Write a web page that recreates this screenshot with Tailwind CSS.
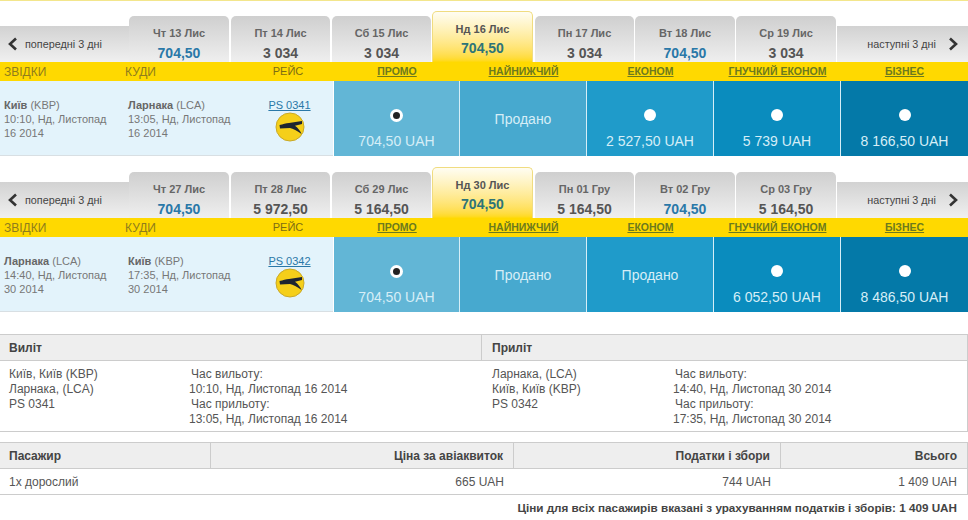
<!DOCTYPE html>
<html lang="en">
<head>
    <meta charset="UTF-8">
    <title>Вибір рейсу</title>
    <script src="https://cdn.jsdelivr.net/npm/@tailwindcss/browser@4"></script>
</head>
<body class="bg-white font-['Liberation_Sans',Arial,sans-serif] w-[968px] h-[520px] overflow-hidden text-[#555]">

<div class="h-px bg-[#f3e68c]"></div>

<!-- Outbound flight -->
<section class="mt-[10px]">
    <div class="flex items-end h-[51px]">
        <div class="w-[129px] h-[36px] flex items-center pl-[7px] gap-[7px] bg-gradient-to-b from-[#d2d2d2] to-[#f0f0f0] text-[10.8px] text-[#444]">
            <svg width="11" height="14" viewBox="0 0 11 14"><path d="M9 1.5 3 7l6 5.5" fill="none" stroke="#333" stroke-width="2.6"/></svg>
            <span>попередні 3 дні</span>
        </div>
        <div class="w-[100px] h-[46px] mr-[2px] rounded-t-[5px] bg-gradient-to-b from-[#cfcfcf] to-[#efefef] text-center font-bold"><div class="text-[11px] mt-[9px] text-[#666]">Чт 13 Лис</div><div class="text-[14px] mt-[1px] text-[#2a78a8]">704,50</div></div>
        <div class="w-[99px] h-[46px] mr-[2px] rounded-t-[5px] bg-gradient-to-b from-[#cfcfcf] to-[#efefef] text-center font-bold"><div class="text-[11px] mt-[9px] text-[#666]">Пт 14 Лис</div><div class="text-[14px] mt-[1px] text-[#555]">3 034</div></div>
        <div class="w-[99px] h-[46px] mr-px rounded-t-[5px] bg-gradient-to-b from-[#cfcfcf] to-[#efefef] text-center font-bold"><div class="text-[11px] mt-[9px] text-[#666]">Сб 15 Лис</div><div class="text-[14px] mt-[1px] text-[#555]">3 034</div></div>
        <div class="w-[101px] h-[51px] mr-[2px] rounded-t-[5px] border border-b-0 border-[#f0dc80] bg-gradient-to-b from-[#fffdf2] to-[#ffd900] text-center font-bold"><div class="text-[11px] mt-[9px] text-[#555]">Нд 16 Лис</div><div class="text-[14px] text-[#2d7478]">704,50</div></div>
        <div class="w-[99px] h-[46px] mr-px rounded-t-[5px] bg-gradient-to-b from-[#cfcfcf] to-[#efefef] text-center font-bold"><div class="text-[11px] mt-[9px] text-[#666]">Пн 17 Лис</div><div class="text-[14px] mt-[1px] text-[#555]">3 034</div></div>
        <div class="w-[100px] h-[46px] mr-px rounded-t-[5px] bg-gradient-to-b from-[#cfcfcf] to-[#efefef] text-center font-bold"><div class="text-[11px] mt-[9px] text-[#666]">Вт 18 Лис</div><div class="text-[14px] mt-[1px] text-[#2a78a8]">704,50</div></div>
        <div class="w-[100px] h-[46px] mr-px rounded-t-[5px] bg-gradient-to-b from-[#cfcfcf] to-[#efefef] text-center font-bold"><div class="text-[11px] mt-[9px] text-[#666]">Ср 19 Лис</div><div class="text-[14px] mt-[1px] text-[#555]">3 034</div></div>
        <div class="flex-1 h-[36px] flex items-center justify-end pr-[9px] gap-[12px] bg-gradient-to-b from-[#d2d2d2] to-[#f0f0f0] text-[10.8px] text-[#444]">
            <span>наступні 3 дні</span>
            <svg width="11" height="14" viewBox="0 0 11 14"><path d="M2 1.5 8 7l-6 5.5" fill="none" stroke="#333" stroke-width="2.6"/></svg>
        </div>
    </div>
    <div class="flex h-[19px] items-center bg-[#ffd900] text-[12px]">
        <span class="w-[125px] pl-[4px] text-[#8f7d1c]">ЗВІДКИ</span>
        <span class="w-[130px] text-[#8f7d1c]">КУДИ</span>
        <span class="w-[66px] mr-[13px] text-center text-[11px] text-[#7d6c14]">РЕЙС</span>
        <a class="w-[126px] text-center font-bold underline text-[10.5px] text-[#6d7a1e]">ПРОМО</a>
        <a class="w-[127px] text-center font-bold underline text-[10.5px] text-[#6d7a1e]">НАЙНИЖЧИЙ</a>
        <a class="w-[127px] text-center font-bold underline text-[10.5px] text-[#6d7a1e]">ЕКОНОМ</a>
        <a class="w-[127px] text-center font-bold underline text-[10.5px] text-[#6d7a1e]">ГНУЧКИЙ ЕКОНОМ</a>
        <a class="flex-1 text-center font-bold underline text-[10.5px] text-[#6d7a1e]">БІЗНЕС</a>
    </div>
    <div class="flex h-[75px]">
        <div class="w-[333px] flex bg-[#e3f3fb] border-b border-[#d8dfe3] text-[11px] leading-[14px] text-[#777] pt-[17px]">
            <div class="w-[124px] pl-[4px]"><b class="text-[#666]">Київ</b> (KBP)<br>10:10, Нд, Листопад<br>16 2014</div>
            <div class="w-[126px] pl-[4px] pr-[10px]"><b class="text-[#666]">Ларнака</b> (LCA)<br>13:05, Нд, Листопад<br>16 2014</div>
            <div class="w-[80px] flex flex-col items-center">
                <a class="underline text-[#2a78a8] text-[11px] leading-[14px] mr-[1px]">PS 0341</a>
                <svg class="mr-[1px]" width="30" height="30" viewBox="0 0 30 30"><circle cx="15" cy="15" r="14" fill="#f5cf1a" stroke="#c9a92a"/><path d="M4.5 13C8 12.5 11 11 14 11L27 9v3l-7 1.7c3 2.3 5.5 5.3 6.5 8.3-4.5-3-8.500-5.500-11.500-6L5 16.500z" fill="#1d2430"/></svg>
            </div>
        </div>
        <div class="w-[125px] ml-px bg-[#62b6d6] flex flex-col items-center text-[14px] text-[#d6eef7]">
            <span class="mt-[28px] w-[13px] h-[13px] rounded-full bg-white flex items-center justify-center"><span class="w-[7px] h-[7px] rounded-full bg-[#222]"></span></span>
            <span class="mt-[9px]">704,50 UAH</span>
        </div>
        <div class="w-[127px] border-l border-[#d6eef7] bg-[#47a9cf] flex items-center justify-center text-[14px] text-[#d6eef7] pt-[1px]">Продано</div>
        <div class="w-[127px] border-l border-[#d6eef7] bg-[#1f9bca] flex flex-col items-center text-[14px] text-[#d6eef7]">
            <span class="mt-[28px] w-[12px] h-[12px] rounded-full bg-white"></span>
            <span class="mt-[10px]">2 527,50 UAH</span>
        </div>
        <div class="w-[127px] border-l border-[#d6eef7] bg-[#0a8cbe] flex flex-col items-center text-[14px] text-[#d6eef7]">
            <span class="mt-[28px] w-[12px] h-[12px] rounded-full bg-white"></span>
            <span class="mt-[10px]">5 739 UAH</span>
        </div>
        <div class="flex-1 border-l border-[#d6eef7] bg-[#0479a8] flex flex-col items-center text-[14px] text-[#d6eef7]">
            <span class="mt-[28px] w-[12px] h-[12px] rounded-full bg-white"></span>
            <span class="mt-[10px]">8 166,50 UAH</span>
        </div>
    </div>
</section>

<!-- Return flight -->
<section class="mt-[11px]">
    <div class="flex items-end h-[51px]">
        <div class="w-[129px] h-[36px] flex items-center pl-[7px] gap-[7px] bg-gradient-to-b from-[#d2d2d2] to-[#f0f0f0] text-[10.8px] text-[#444]">
            <svg width="11" height="14" viewBox="0 0 11 14"><path d="M9 1.5 3 7l6 5.5" fill="none" stroke="#333" stroke-width="2.6"/></svg>
            <span>попередні 3 дні</span>
        </div>
        <div class="w-[100px] h-[46px] mr-[2px] rounded-t-[5px] bg-gradient-to-b from-[#cfcfcf] to-[#efefef] text-center font-bold"><div class="text-[11px] mt-[9px] text-[#666]">Чт 27 Лис</div><div class="text-[14px] mt-[1px] text-[#2a78a8]">704,50</div></div>
        <div class="w-[99px] h-[46px] mr-[2px] rounded-t-[5px] bg-gradient-to-b from-[#cfcfcf] to-[#efefef] text-center font-bold"><div class="text-[11px] mt-[9px] text-[#666]">Пт 28 Лис</div><div class="text-[14px] mt-[1px] text-[#555]">5 972,50</div></div>
        <div class="w-[99px] h-[46px] mr-px rounded-t-[5px] bg-gradient-to-b from-[#cfcfcf] to-[#efefef] text-center font-bold"><div class="text-[11px] mt-[9px] text-[#666]">Сб 29 Лис</div><div class="text-[14px] mt-[1px] text-[#555]">5 164,50</div></div>
        <div class="w-[101px] h-[51px] mr-[2px] rounded-t-[5px] border border-b-0 border-[#f0dc80] bg-gradient-to-b from-[#fffdf2] to-[#ffd900] text-center font-bold"><div class="text-[11px] mt-[9px] text-[#555]">Нд 30 Лис</div><div class="text-[14px] text-[#2d7478]">704,50</div></div>
        <div class="w-[99px] h-[46px] mr-px rounded-t-[5px] bg-gradient-to-b from-[#cfcfcf] to-[#efefef] text-center font-bold"><div class="text-[11px] mt-[9px] text-[#666]">Пн 01 Гру</div><div class="text-[14px] mt-[1px] text-[#555]">5 164,50</div></div>
        <div class="w-[100px] h-[46px] mr-px rounded-t-[5px] bg-gradient-to-b from-[#cfcfcf] to-[#efefef] text-center font-bold"><div class="text-[11px] mt-[9px] text-[#666]">Вт 02 Гру</div><div class="text-[14px] mt-[1px] text-[#2a78a8]">704,50</div></div>
        <div class="w-[100px] h-[46px] mr-px rounded-t-[5px] bg-gradient-to-b from-[#cfcfcf] to-[#efefef] text-center font-bold"><div class="text-[11px] mt-[9px] text-[#666]">Ср 03 Гру</div><div class="text-[14px] mt-[1px] text-[#555]">5 164,50</div></div>
        <div class="flex-1 h-[36px] flex items-center justify-end pr-[9px] gap-[12px] bg-gradient-to-b from-[#d2d2d2] to-[#f0f0f0] text-[10.8px] text-[#444]">
            <span>наступні 3 дні</span>
            <svg width="11" height="14" viewBox="0 0 11 14"><path d="M2 1.5 8 7l-6 5.5" fill="none" stroke="#333" stroke-width="2.6"/></svg>
        </div>
    </div>
    <div class="flex h-[19px] items-center bg-[#ffd900] text-[12px]">
        <span class="w-[125px] pl-[4px] text-[#8f7d1c]">ЗВІДКИ</span>
        <span class="w-[130px] text-[#8f7d1c]">КУДИ</span>
        <span class="w-[66px] mr-[13px] text-center text-[11px] text-[#7d6c14]">РЕЙС</span>
        <a class="w-[126px] text-center font-bold underline text-[10.5px] text-[#6d7a1e]">ПРОМО</a>
        <a class="w-[127px] text-center font-bold underline text-[10.5px] text-[#6d7a1e]">НАЙНИЖЧИЙ</a>
        <a class="w-[127px] text-center font-bold underline text-[10.5px] text-[#6d7a1e]">ЕКОНОМ</a>
        <a class="w-[127px] text-center font-bold underline text-[10.5px] text-[#6d7a1e]">ГНУЧКИЙ ЕКОНОМ</a>
        <a class="flex-1 text-center font-bold underline text-[10.5px] text-[#6d7a1e]">БІЗНЕС</a>
    </div>
    <div class="flex h-[75px]">
        <div class="w-[333px] flex bg-[#e3f3fb] border-b border-[#d8dfe3] text-[11px] leading-[14px] text-[#777] pt-[17px]">
            <div class="w-[124px] pl-[4px]"><b class="text-[#666]">Ларнака</b> (LCA)<br>14:40, Нд, Листопад<br>30 2014</div>
            <div class="w-[126px] pl-[4px] pr-[10px]"><b class="text-[#666]">Київ</b> (KBP)<br>17:35, Нд, Листопад<br>30 2014</div>
            <div class="w-[80px] flex flex-col items-center">
                <a class="underline text-[#2a78a8] text-[11px] leading-[14px] mr-[1px]">PS 0342</a>
                <svg class="mr-[1px]" width="30" height="30" viewBox="0 0 30 30"><circle cx="15" cy="15" r="14" fill="#f5cf1a" stroke="#c9a92a"/><path d="M4.5 13C8 12.5 11 11 14 11L27 9v3l-7 1.7c3 2.3 5.500 5.300 6.500 8.300-4.500-3-8.500-5.500-11.500-6L5 16.500z" fill="#1d2430"/></svg>
            </div>
        </div>
        <div class="w-[125px] ml-px bg-[#62b6d6] flex flex-col items-center text-[14px] text-[#d6eef7]">
            <span class="mt-[28px] w-[13px] h-[13px] rounded-full bg-white flex items-center justify-center"><span class="w-[7px] h-[7px] rounded-full bg-[#222]"></span></span>
            <span class="mt-[9px]">704,50 UAH</span>
        </div>
        <div class="w-[127px] border-l border-[#d6eef7] bg-[#47a9cf] flex items-center justify-center text-[14px] text-[#d6eef7] pt-[1px]">Продано</div>
        <div class="w-[127px] border-l border-[#d6eef7] bg-[#1f9bca] flex items-center justify-center text-[14px] text-[#d6eef7] pt-[1px]">Продано</div>
        <div class="w-[127px] border-l border-[#d6eef7] bg-[#0a8cbe] flex flex-col items-center text-[14px] text-[#d6eef7]">
            <span class="mt-[28px] w-[12px] h-[12px] rounded-full bg-white"></span>
            <span class="mt-[10px]">6 052,50 UAH</span>
        </div>
        <div class="flex-1 border-l border-[#d6eef7] bg-[#0479a8] flex flex-col items-center text-[14px] text-[#d6eef7]">
            <span class="mt-[28px] w-[12px] h-[12px] rounded-full bg-white"></span>
            <span class="mt-[10px]">8 486,50 UAH</span>
        </div>
    </div>
</section>

<!-- Flight details -->
<div class="mt-[22px] border-y border-[#ccc] border-r text-[12px] text-[#444]">
    <div class="flex h-[26px] bg-[#eee] border-b border-[#ccc] font-bold items-center">
        <div class="w-[482px] pl-[9px] h-full flex items-center border-r border-[#ccc]">Виліт</div>
        <div class="flex-1 pl-[10px]">Приліт</div>
    </div>
    <div class="flex h-[70px] pt-[6px] leading-[15px] text-[#555]">
        <div class="w-[189px] pl-[9px]">Київ, Київ (KBP)<br>Ларнака, (LCA)<br>PS 0341</div>
        <div class="w-[303px]"><span class="pl-[2px]">Час вильоту:</span><br>10:10, Нд, Листопад 16 2014<br><span class="pl-[2px]">Час прильоту:</span><br>13:05, Нд, Листопад 16 2014</div>
        <div class="w-[181px]">Ларнака, (LCA)<br>Київ, Київ (KBP)<br>PS 0342</div>
        <div class="flex-1"><span class="pl-[2px]">Час вильоту:</span><br>14:40, Нд, Листопад 30 2014<br><span class="pl-[2px]">Час прильоту:</span><br>17:35, Нд, Листопад 30 2014</div>
    </div>
</div>

<!-- Price summary -->
<div class="mt-[10px] border-y border-r border-[#ccc] text-[12px]">
    <div class="flex h-[26px] bg-[#eee] border-b border-[#ccc] font-bold text-[#444] items-center">
        <div class="w-[211px] pl-[9px] h-full flex items-center border-r border-[#ccc]">Пасажир</div>
        <div class="w-[303px] pr-[10px] h-full flex items-center justify-end border-r border-[#ccc]">Ціна за авіаквиток</div>
        <div class="w-[267px] pr-[10px] h-full flex items-center justify-end border-r border-[#ccc]">Податки і збори</div>
        <div class="flex-1 pr-[10px] text-right">Всього</div>
    </div>
    <div class="flex h-[25px] items-center text-[#555]">
        <div class="w-[211px] pl-[9px]">1х дорослий</div>
        <div class="w-[303px] pr-[10px] text-right">665 UAH</div>
        <div class="w-[267px] pr-[10px] text-right">744 UAH</div>
        <div class="flex-1 pr-[10px] text-right">1 409 UAH</div>
    </div>
</div>
<div class="mt-[4px] pr-[11px] text-right text-[11.7px] font-bold text-[#444]">Ціни для всіх пасажирів вказані з урахуванням податків і зборів: 1 409 UAH</div>

</body>
</html>
